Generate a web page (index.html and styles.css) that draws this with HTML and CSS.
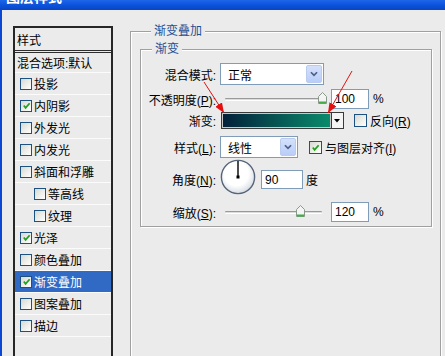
FILE: index.html
```html
<!DOCTYPE html>
<html>
<head>
<meta charset="utf-8">
<link rel="stylesheet" href="styles.css">
</head>
<body>
<div class="win">
  <div class="titlebar"><span class="title">图层样式</span></div>
  <div class="body">
    <div class="list">
      <div class="li head">样式</div>
      <div class="li blend">混合选项:默认</div>
      <div class="li"><span class="cb"></span><span>投影</span></div>
      <div class="li"><span class="cb on"><svg viewBox="0 0 10 10"><path d="M2 5 L4 7.5 L8.5 2.5" fill="none" stroke="#21a121" stroke-width="2"/></svg></span><span>内阴影</span></div>
      <div class="li"><span class="cb"></span><span>外发光</span></div>
      <div class="li"><span class="cb"></span><span>内发光</span></div>
      <div class="li"><span class="cb"></span><span>斜面和浮雕</span></div>
      <div class="li sub"><span class="cb"></span><span>等高线</span></div>
      <div class="li sub"><span class="cb"></span><span>纹理</span></div>
      <div class="li"><span class="cb on"><svg viewBox="0 0 10 10"><path d="M2 5 L4 7.5 L8.5 2.5" fill="none" stroke="#21a121" stroke-width="2"/></svg></span><span>光泽</span></div>
      <div class="li"><span class="cb"></span><span>颜色叠加</span></div>
      <div class="li sel"><span class="cb on"><svg viewBox="0 0 10 10"><path d="M2 5 L4 7.5 L8.5 2.5" fill="none" stroke="#21a121" stroke-width="2"/></svg></span><span>渐变叠加</span></div>
      <div class="li"><span class="cb"></span><span>图案叠加</span></div>
      <div class="li"><span class="cb"></span><span>描边</span></div>
    </div>
    <div class="group outer">
      <div class="legend">渐变叠加</div>
      <div class="group inner">
        <div class="legend">渐变</div>
        <div class="frow r1">
          <span class="lbl">混合模式:</span>
          <div class="select wide"><span class="stext">正常</span><span class="dd"><svg viewBox="0 0 16 18"><path d="M4.5 7 L8 10.5 L11.5 7" fill="none" stroke="#4d6185" stroke-width="2"/></svg></span></div>
        </div>
        <div class="frow r2">
          <span class="lbl">不透明度(<u>P</u>):</span>
          <div class="slider"><span class="track"></span><span class="thumb t100"><svg viewBox="0 0 9 12"><path d="M0.5 11.5 V4.5 L4.5 0.5 L8.5 4.5 V11.5 Z" fill="#f4f4f4" stroke="#8a9a8a"/><path d="M1 10.5 H8" stroke="#3cb043" stroke-width="2"/></svg></span></div>
          <div class="field">100</div>
          <span class="unit">%</span>
        </div>
        <div class="frow r3">
          <span class="lbl">渐变:</span>
          <div class="grad"><span class="gbar"></span><span class="gdd"><svg viewBox="0 0 10 15"><path d="M2 6 H8 L5 9.5 Z" fill="#000"/></svg></span></div>
          <span class="cb big rev"></span><span class="ctext">反向(<u>R</u>)</span>
        </div>
        <div class="frow r4">
          <span class="lbl">样式(<u>L</u>):</span>
          <div class="select narrow"><span class="stext">线性</span><span class="dd"><svg viewBox="0 0 16 18"><path d="M4.5 7 L8 10.5 L11.5 7" fill="none" stroke="#4d6185" stroke-width="2"/></svg></span></div>
          <span class="cb big on align"><svg viewBox="0 0 10 10"><path d="M2 5 L4 7.5 L8.5 2.5" fill="none" stroke="#21a121" stroke-width="2"/></svg></span><span class="ctext">与图层对齐(<u>I</u>)</span>
        </div>
        <div class="frow r5">
          <span class="lbl">角度(<u>N</u>):</span>
          <svg class="dial" viewBox="0 0 36 36" width="36" height="36">
            <defs><radialGradient id="dg" cx="0.45" cy="0.4" r="0.6"><stop offset="0.6" stop-color="#ffffff"/><stop offset="1" stop-color="#d8dde4"/></radialGradient></defs>
            <circle cx="18" cy="18" r="16.6" fill="url(#dg)" stroke="#56657a" stroke-width="1.4"/>
            <line x1="18" y1="18" x2="18" y2="2" stroke="#000" stroke-width="1.4"/>
            <rect x="16.5" y="16.5" width="3" height="3" fill="#000"/>
          </svg>
          <div class="field angle">90</div>
          <span class="unit deg">度</span>
        </div>
        <div class="frow r6">
          <span class="lbl">缩放(<u>S</u>):</span>
          <div class="slider"><span class="track"></span><span class="thumb t120"><svg viewBox="0 0 9 12"><path d="M0.5 11.5 V4.5 L4.5 0.5 L8.5 4.5 V11.5 Z" fill="#f4f4f4" stroke="#8a9a8a"/><path d="M1 10.5 H8" stroke="#3cb043" stroke-width="2"/></svg></span></div>
          <div class="field">120</div>
          <span class="unit">%</span>
        </div>
      </div>
    </div>
  </div>
  <svg class="arrows" width="445" height="356" viewBox="0 0 445 356">
    <defs><marker id="ah" viewBox="0 0 10 8" refX="10" refY="4" markerWidth="10" markerHeight="8" markerUnits="userSpaceOnUse" orient="auto"><path d="M0 0 L10 4 L0 8 Z" fill="#e41010"/></marker></defs>
    <line x1="204" y1="82" x2="224" y2="113" stroke="#e41010" stroke-width="1" marker-end="url(#ah)"/>
    <line x1="352" y1="71" x2="328" y2="113" stroke="#e41010" stroke-width="1" marker-end="url(#ah)"/>
  </svg>
</div>
</body>
</html>
```
FILE: styles.css
```css
* { box-sizing: border-box; }
html, body { margin: 0; padding: 0; }
body {
  font-family: "Liberation Sans", "Noto Sans CJK SC", sans-serif;
  font-size: 12px;
  color: #000;
  background: #ebebeb;
}
.win {
  position: relative;
  width: 445px;
  height: 356px;
  overflow: hidden;
  background: #ebebeb;
}
.titlebar {
  height: 10px;
  background: linear-gradient(#1d66ea, #0b53dc 50%, #0a44c4);
  overflow: hidden;
  padding-left: 6px;
}
.title {
  display: block;
  margin-top: -10px;
  font-size: 14px;
  line-height: 14px;
  font-weight: bold;
  color: #fff;
}
.body {
  display: flex;
  align-items: flex-start;
  border-left: 2px solid #0a47d2;
  height: 346px;
}
.list {
  margin: 16px 0 0 11px;
  width: 100px;
  height: 340px;
  border: 2px solid #262626;
  border-bottom: none;
  flex: none;
}
.li {
  display: flex;
  align-items: center;
  height: 22px;
  border-bottom: 1px solid #fbfbfb;
  padding-left: 5px;
  white-space: nowrap;
}
.li.head {
  height: 25px;
  padding-left: 2px;
  border-bottom: 3px double #2e2e2e;
}
.li.blend {
  height: 20px;
  padding-left: 2px;
}
.li.sub { padding-left: 19px; }
.li.sel { background: #316ac5; color: #fff; }
.cb {
  display: inline-flex;
  align-items: center;
  justify-content: center;
  width: 12px;
  height: 12px;
  border: 1px solid #1c5180;
  background: linear-gradient(135deg, #d9d9d2, #ffffff);
  margin-right: 2px;
  flex: none;
}
.cb svg { width: 9px; height: 9px; display: block; }
.cb.big { width: 13px; height: 13px; }
.group {
  border: 1px solid #a0a0a0;
  box-shadow: inset 1px 1px 0 #fff, 1px 1px 0 #fff;
}
.outer {
  margin: 21px 0 0 17px;
  width: 311px;
  height: 330px;
  padding-left: 9px;
  flex: none;
}
.legend {
  display: block;
  width: fit-content;
  margin: -9px 0 0 11px;
  padding: 0 3px;
  line-height: 16px;
  height: 16px;
  background: #ebebeb;
  color: #1f4f94;
}
.inner {
  margin-top: 10px;
  width: 292px;
  height: 178px;
}
.inner .legend { margin-left: 11px; }
.frow {
  display: flex;
  align-items: center;
}
.lbl {
  width: 75px;
  text-align: right;
  margin-right: 4px;
  white-space: nowrap;
  flex: none;
}
.r1 { margin-top: 6px; height: 22px; }
.r2 { margin-top: 4px; height: 20px; }
.r3 { margin-top: 3px; height: 17px; }
.r4 { margin-top: 7px; height: 22px; }
.r5 { margin-top: 3px; height: 36px; }
.r6 { margin-top: 5px; height: 20px; }
.select {
  display: flex;
  align-items: center;
  justify-content: space-between;
  height: 22px;
  border: 1px solid #7f9db9;
  background: #fff;
  padding: 1px;
}
.select.wide { width: 104px; }
.select.narrow { width: 78px; }
.stext { padding-left: 6px; }
.dd {
  width: 16px;
  height: 18px;
  border-radius: 2px;
  border: 1px solid #b9cbef;
  background: linear-gradient(#d5e1fb, #b8cdf8);
}
.dd svg { display: block; width: 14px; height: 16px; }
.slider {
  position: relative;
  width: 107px;
  height: 20px;
}
.track {
  position: absolute;
  left: 5px;
  right: 5px;
  top: 9px;
  height: 3px;
  border-top: 1px solid #9a9a9a;
  border-bottom: 1px solid #fff;
  background: #dcdcdc;
  border-radius: 1px;
}
.thumb {
  position: absolute;
  top: 3px;
  width: 9px;
  height: 12px;
}
.thumb svg { display: block; width: 9px; height: 12px; }
.thumb.t100 { left: 98px; }
.thumb.t120 { left: 76px; }
.field {
  margin-left: 4px;
  width: 38px;
  height: 20px;
  border: 1px solid #7f9db9;
  background: #fff;
  padding-left: 3px;
  line-height: 18px;
}
.field.angle { width: 42px; height: 19px; margin-left: 5px; }
.unit { margin-left: 4px; }
.unit.deg { margin-left: 3px; }
.grad {
  display: flex;
  margin-left: 1px;
  height: 17px;
  border: 1px solid #3a3a3a;
}
.gbar {
  width: 109px;
  border: 1px solid #c8c8c8;
  background: linear-gradient(to right, #03203a, #0a8b6b);
}
.gdd {
  width: 12px;
  border-left: 1px solid #3a3a3a;
  background: #f4f4f4;
}
.gdd svg { display: block; width: 10px; height: 15px; }
.rev { margin-left: 10px; margin-right: 3px; }
.align { margin-left: 11px; margin-right: 3px; }
.ctext { white-space: nowrap; }
.dial { display: block; margin-top: -4px; flex: none; }
.arrows {
  position: absolute;
  left: 0;
  top: 0;
  pointer-events: none;
}
```
